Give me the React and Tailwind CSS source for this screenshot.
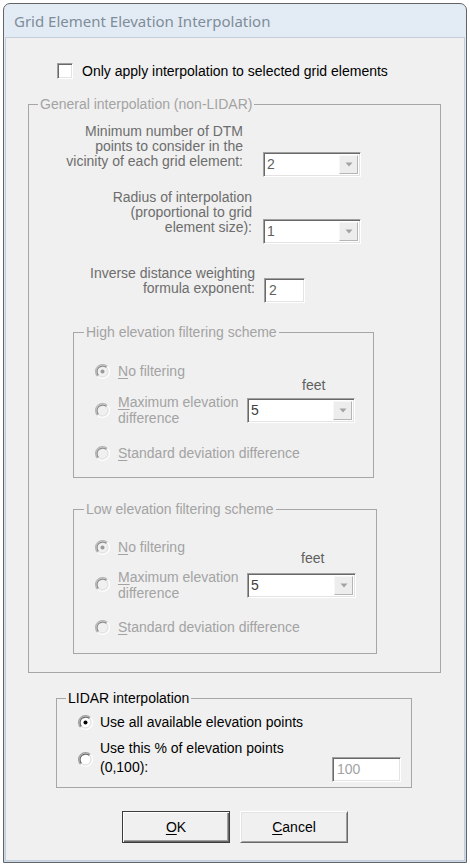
import React from 'react';

function Radio({ checked, disabled }) {
  return (
    <svg width="15" height="15" viewBox="0 0 12 12" className="shrink-0">
      <circle cx="6" cy="6" r="4.6" fill={disabled ? '#f0f0f0' : '#ffffff'} />
      <path d="M2.11 9.89 A5.5 5.5 0 0 1 9.89 2.11" fill="none" stroke={disabled ? '#b4b4b4' : '#a0a0a0'} strokeWidth="1" />
      <path d="M9.89 2.11 A5.5 5.5 0 0 1 2.11 9.89" fill="none" stroke="#ffffff" strokeWidth="1" />
      <path d="M2.82 9.18 A4.5 4.5 0 0 1 9.18 2.82" fill="none" stroke={disabled ? '#8c8c8c' : '#696969'} strokeWidth="1" />
      <path d="M9.18 2.82 A4.5 4.5 0 0 1 2.82 9.18" fill="none" stroke="#e3e3e3" strokeWidth="1" />
      {checked && <circle cx="6" cy="6" r="1.6" fill={disabled ? '#9a9a9a' : '#000000'} />}
    </svg>
  );
}

function Combo({ value, width, textColor }) {
  return (
    <div className={`flex h-[25px] ${width} items-stretch border border-t-[#a0a0a0] border-l-[#a0a0a0] border-b-white border-r-white bg-white shadow-[inset_1px_1px_0_#696969,inset_-1px_-1px_0_#e3e3e3]`}>
      <div className={`flex flex-1 items-center pl-[3px] ${textColor}`}>{value}</div>
      <div className="my-[2px] mr-[2px] flex w-[19px] items-center justify-center border border-t-[#f7f7f7] border-l-[#f7f7f7] border-b-[#b5b5b5] border-r-[#b5b5b5] bg-[#ededed]">
        <svg width="8" height="5" viewBox="0 0 8 5">
          <path d="M0.5 0.5 H7.5 L4 4.5 Z" fill="#a3a3a3" />
        </svg>
      </div>
    </div>
  );
}

function Edit({ value, width, textColor, className = '' }) {
  return (
    <div className={`flex h-[25px] ${width} items-center border border-t-[#a0a0a0] border-l-[#a0a0a0] border-b-white border-r-white bg-white pl-[4px] shadow-[inset_1px_1px_0_#696969,inset_-1px_-1px_0_#e3e3e3] ${textColor} ${className}`}>
      {value}
    </div>
  );
}

function FilterGroup({ title, width, legendTop, rowATop, rowBShift, radioTop, textTop, feetPad, comboTop, comboWidth, rowCTop, pb }) {
  return (
    <fieldset className={`ml-[44px] ${width} ${legendTop} ${pb} border border-[#a6a6a6]`}>
      <legend className="ml-[10px] px-[2px] leading-[15px] text-[#a3a3a3]">{title}</legend>
      <div className={`${rowATop} flex h-[15px] items-center pl-[21px] text-[#a3a3a3]`}>
        <Radio checked disabled />
        <span className="ml-[8px]"><u className="underline-offset-2">N</u>o filtering</span>
      </div>
      <div className={`${rowBShift} flex`}>
        <div className="flex w-[173px] items-start pl-[21px] text-[#a3a3a3]">
          <div className={radioTop}><Radio disabled /></div>
          <div className={`ml-[8px] ${textTop} leading-[16px]`}>
            <u className="underline-offset-2">M</u>aximum elevation<br />difference
          </div>
        </div>
        <div className="flex flex-col">
          <div className={`${feetPad} leading-[15px] text-[#5f5f5f]`}>feet</div>
          <div className={comboTop}>
            <Combo value="5" width={comboWidth} textColor="text-[#404040]" />
          </div>
        </div>
      </div>
      <div className={`${rowCTop} flex h-[15px] items-center pl-[21px] text-[#a3a3a3]`}>
        <Radio disabled />
        <span className="ml-[8px]"><u className="underline-offset-2">S</u>tandard deviation difference</span>
      </div>
    </fieldset>
  );
}

export default function App() {
  return (
    <div className="h-[866px] w-[470px] bg-white pl-[3px] pt-[3px] font-['Liberation_Sans',Arial,sans-serif] text-[14px] leading-[15px] text-black">
      <div className="flex h-[860px] w-[464px] flex-col rounded-t-[7px] border border-[#646464] bg-gradient-to-b from-[#e3ecf5] to-[#ccdaea] px-px pb-px">
        {/* Title bar */}
        <div className="flex h-[33px] items-center pl-[9px] pt-[2px] font-['Noto_Sans',sans-serif] text-[15px] text-[#7f8c99]">
          Grid Element Elevation Interpolation
        </div>

        {/* Dialog body */}
        <div className="flex flex-1 flex-col border border-[#c3ceda] bg-[#f0f0f0]">
          <div className="ml-[51px] mt-[25px] flex h-[16px] items-center">
            <div className="h-[16px] w-[16px] border border-t-[#a0a0a0] border-l-[#a0a0a0] border-b-white border-r-white bg-white shadow-[inset_1px_1px_0_#696969,inset_-1px_-1px_0_#e3e3e3]" />
            <span className="ml-[9px]">Only apply interpolation to selected grid elements</span>
          </div>

          <fieldset className="ml-[22px] mt-[18px] w-[413px] border border-[#a6a6a6] pb-[18px]">
            <legend className="ml-[9px] px-[2px] leading-[15px] text-[#a3a3a3]">General interpolation (non-LIDAR)</legend>

            <div className="mt-[12px] flex">
              <div className="w-[214px] whitespace-nowrap text-right text-[#6d6d6d]">
                Minimum number of DTM<br />points to consider in the<br />vicinity of each grid element:
              </div>
              <div className="ml-[20px] mt-[28px]">
                <Combo value="2" width="w-[98px]" textColor="text-[#5f5f5f]" />
              </div>
            </div>

            <div className="mt-[13px] flex">
              <div className="w-[223px] whitespace-nowrap text-right text-[#6d6d6d]">
                Radius of interpolation<br />(proportional to grid<br />element size):
              </div>
              <div className="ml-[11px] mt-[29px]">
                <Combo value="1" width="w-[98px]" textColor="text-[#5f5f5f]" />
              </div>
            </div>

            <div className="mt-[22px] flex">
              <div className="w-[226px] whitespace-nowrap text-right text-[#6d6d6d]">
                Inverse distance weighting<br />formula exponent:
              </div>
              <div className="ml-[9px] mt-[12px]">
                <Edit value="2" width="w-[41px]" textColor="text-[#5f5f5f]" />
              </div>
            </div>

            <FilterGroup
              title="High elevation filtering scheme"
              width="w-[301px]"
              legendTop="mt-[22px]"
              rowATop="mt-[24px]"
              rowBShift="-mt-px"
              radioTop="mt-[25px]"
              textTop="mt-[16px]"
              feetPad="pl-[55px]"
              comboTop="mt-[5px]"
              comboWidth="w-[108px]"
              rowCTop="mt-[20px]"
              pb="pb-[16px]"
            />

            <FilterGroup
              title="Low elevation filtering scheme"
              width="w-[304px]"
              legendTop="mt-[24px]"
              rowATop="mt-[23px]"
              rowBShift="-mt-[4px]"
              radioTop="mt-[26px]"
              textTop="mt-[18px]"
              feetPad="pl-[54px]"
              comboTop="mt-[7px]"
              comboWidth="w-[109px]"
              rowCTop="mt-[19px]"
              pb="pb-[18px]"
            />
          </fieldset>

          <fieldset className="ml-[50px] mt-[18px] w-[356px] border border-[#a6a6a6] pb-[5px]">
            <legend className="ml-[9px] px-[2px] leading-[15px]">LIDAR interpolation</legend>
            <div className="mt-[9px] flex h-[15px] items-center pl-[21px]">
              <Radio checked />
              <span className="ml-[7px]">Use all available elevation points</span>
            </div>
            <div className="mt-[9px] flex items-start pl-[21px]">
              <div className="mt-[13px]"><Radio /></div>
              <div className="ml-[7px] leading-[19px]">
                Use this % of elevation points<br />(0,100):
              </div>
              <Edit value="100" width="w-[69px]" textColor="text-[#a3a3a3]" className="ml-auto mr-[10px] mt-[18px]" />
            </div>
          </fieldset>

          <div className="ml-[116px] mt-[23px] flex gap-[10px]">
            <button className="flex h-[32px] w-[108px] items-center justify-center border border-[#3c3c3c] bg-[#f0f0f0] shadow-[inset_1px_1px_0_#ffffff,inset_-1px_-1px_0_#696969,inset_-2px_-2px_0_#a0a0a0]">
              <span><u className="underline-offset-2">O</u>K</span>
            </button>
            <button className="flex h-[32px] w-[108px] items-center justify-center border border-t-[#ffffff] border-l-[#ffffff] border-b-[#696969] border-r-[#696969] bg-[#f0f0f0] shadow-[inset_1px_1px_0_#e3e3e3,inset_-1px_-1px_0_#a0a0a0]">
              <span><u className="underline-offset-2">C</u>ancel</span>
            </button>
          </div>
        </div>
      </div>
    </div>
  );
}
